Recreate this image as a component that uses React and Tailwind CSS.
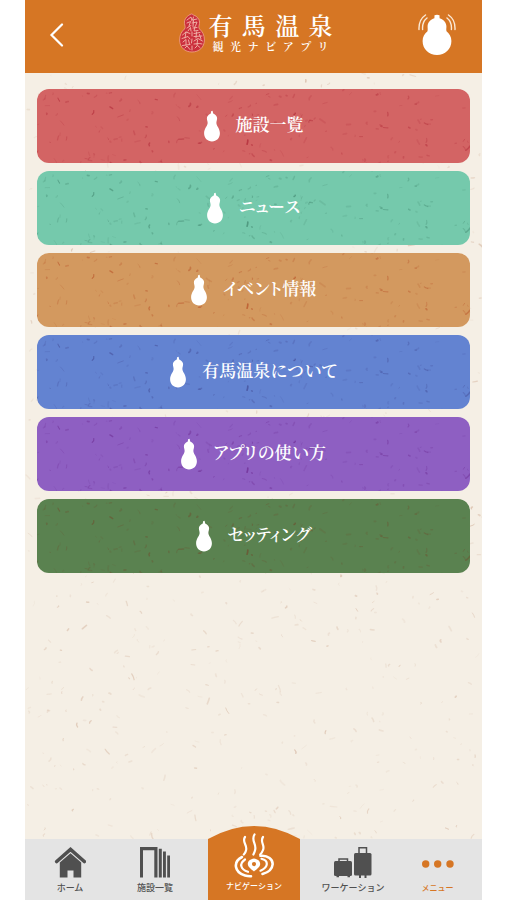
import React from "react";

const JP = "font-['Noto_Sans_CJK_JP',sans-serif]";
const MINCHO = "font-['Noto_Serif_CJK_JP','Noto_Sans_CJK_JP',serif]";
const LOGO = "font-['Liberation_Serif','Noto_Serif_CJK_JP','Noto_Sans_CJK_JP',serif]";

const items = [
  { label: "施設一覧", bg: "bg-[#d36464]", speck: "#b02a38" },
  { label: "ニュース", bg: "bg-[#76c9ac]", speck: "#458a72" },
  { label: "イベント情報", bg: "bg-[#d39a60]", speck: "#b9532a" },
  { label: "有馬温泉について", bg: "bg-[#6383d1]", speck: "#454f98" },
  { label: "アプリの使い方", bg: "bg-[#8e60c3]", speck: "#702f94" },
  { label: "セッティング", bg: "bg-[#5a8250]", speck: "#6f5030" },
];

// Deterministic fibres of the washi paper
function makeFibres(seed, count, width, height) {
  let s = seed;
  const next = () => {
    s = (s + 0x6d2b79f5) | 0;
    let t = Math.imul(s ^ (s >>> 15), 1 | s);
    t = (t + Math.imul(t ^ (t >>> 7), 61 | t)) ^ t;
    return ((t ^ (t >>> 14)) >>> 0) / 4294967296;
  };
  return Array.from({ length: count }, () => {
    const x = next() * width;
    const y = next() * height;
    const angle = next() * Math.PI;
    const len = 1 + next() * next() * 6;
    const dx = Math.cos(angle) * len;
    const dy = Math.sin(angle) * len;
    const bend = (next() - 0.5) * 3;
    return {
      d: `M${x.toFixed(1)} ${y.toFixed(1)}q${(dx / 2 + bend).toFixed(1)} ${(dy / 2).toFixed(1)} ${dx.toFixed(1)} ${dy.toFixed(1)}`,
      w: 0.6 + next() * 1.1,
      o: 0.15 + next() * next() * 0.7,
    };
  });
}

const paperFibres = makeFibres(11, 900, 457, 828);
const buttonFibres = makeFibres(42, 190, 433, 75);

function Washi({ fibres, color, strength }) {
  return (
    <svg
      className="pointer-events-none absolute inset-0 h-full w-full"
      aria-hidden="true"
      fill="none"
      stroke={color}
      strokeLinecap="round"
      opacity={strength}
    >
      {fibres.map((f, i) => (
        <path key={i} d={f.d} strokeWidth={f.w} opacity={f.o} />
      ))}
    </svg>
  );
}

function Gourd() {
  return (
    <svg className="relative h-8 w-4 shrink-0" viewBox="0 0 16 32" fill="#fff" aria-hidden="true">
      <path d="M7.100 1.200 8.600.8 9.200 3.400C11.800 4.600 13.200 6.300 13.100 8.600 13 10.500 12.300 11.500 12.400 13.200 12.600 16.300 15.900 18.400 15.900 23.300 15.900 28.200 12.500 31.400 8 31.400S.1 28.200.1 23.300C.1 18.400 3.400 16.300 3.600 13.200 3.700 11.500 3 10.500 2.900 8.600 2.800 6.300 4.200 4.600 6.800 3.400Z" />
    </svg>
  );
}

function BellGourd() {
  return (
    <svg className="h-[42px] w-[38px]" viewBox="0 0 38 42" fill="none" aria-hidden="true">
      <path
        fill="#fff"
        d="M16.500 1.300Q19 .2 21.500 1.300L21.600 4.200C25.500 5.300 28.200 8.300 28.400 12 28.500 14.200 28 15.600 28.500 17.200 31.500 19.500 33.400 22.700 33.400 27 33.400 35.200 27 41 19 41S4.600 35.200 4.600 27C4.600 22.700 6.500 19.500 9.500 17.200 10 15.600 9.500 14.200 9.600 12 9.800 8.300 12.500 5.300 16.400 4.200Z"
      />
      <g stroke="#fbe9d6" strokeWidth="1.400" strokeLinecap="round">
        <path d="M7.500 1C3 4 .7 9 1 15.500M9 4C5.600 6.600 4.200 10.500 4.600 15.500M30.500 1C35 4 37.300 9 37 15.500M29 4C32.400 6.600 33.800 10.500 33.400 15.500" />
      </g>
    </svg>
  );
}

function SealGourd() {
  return (
    <svg className="h-10 w-[26px] shrink-0" viewBox="0 0 26 40" fill="none" aria-hidden="true">
      <path
        fill="#cb2f3c"
        stroke="#f0a58c"
        strokeWidth=".8"
        d="M11 1.500Q13 0 14.500 2C18.500 3.500 21 6.500 20.500 10.500 20.200 13 19.200 14 20.500 16 23.500 18.500 25.400 22 25.400 27 25.400 34.500 20 39 13 39S.6 34.500.6 27C.6 22 2.500 18.500 5.500 16 6.800 14 5.800 13 5.500 10.500 5 6.500 7.500 3.500 11 1.500Z"
      />
      <g stroke="#f3b9ae" strokeWidth=".9" strokeLinecap="round">
        <path d="M8 7 12 4 13 8M14.500 4 13.500 7 18 6M8 10 11.500 8.500 10 13M13 10 18 9 16.500 13M14.500 7.500 14 13.500M8 15 12 12.500M9 18 11.500 14.500 12 18M14 15 18 14.500M16 13.500 15 18 19 17.500M3.500 22 7 19 11 20.500M7 19 6 25M3 25.500 9 23.500 11 26M4 29 7 26.500 7 32M9.500 27 10.500 31M3.500 32.500 11 31.500M6 35 8 33 11 36.500M13 19V23M13 26 12.500 30M13 33V37M15 20.500 21 19.500M17.500 19 17 25M15 23.500 23 23M20.500 21.500 22 26M15 28 19 25.500 23.500 28M18.500 27 18 32M15 31 20.500 30.500 23 31M16 35 18.500 32.500 21 34.500" />
      </g>
    </svg>
  );
}

function HomeIcon() {
  return (
    <svg className="h-[31px] w-8" viewBox="0 0 32 31" fill="none" aria-hidden="true">
      <path stroke="#505050" strokeWidth="3.600" strokeLinecap="round" d="M2.700 14.500 16.500 2.500 30.300 14.500" />
      <path fill="#505050" d="M5.800 15.600 16.500 6.200 27.200 15.600V30.500H19.500V23.500H13.500V30.500H5.800Z" />
    </svg>
  );
}

function FacilityIcon() {
  return (
    <svg className="h-[31px] w-8" viewBox="0 0 32 31" fill="#505050" aria-hidden="true">
      <path d="M1 0H18.500V30.500H15.300V3.200H4V30.500H1ZM19.800 1.800H22.800V30.500H19.800ZM24 4.500H26.900V30.500H24ZM28.200 8.500H31V30.500H28.200Z" />
    </svg>
  );
}

function SpringIcon() {
  return (
    <svg className="h-[46px] w-10" viewBox="0 0 40 46" fill="none" stroke="#fff" strokeLinecap="round" aria-hidden="true">
      <path strokeWidth="2.200" d="M11 4C7.500 9 13.800 12 12 17.500 11.600 19.500 10.800 20.500 9.800 21.500M20.500 1.500C16.500 7.500 23.200 11 21 17.500 20.600 19 20 20.300 19.400 21.500M29 4C25.500 9 31.300 12 29 17 28.300 19 27.500 20.300 26.200 21.500" />
      <path
        fill="#fff"
        fillRule="evenodd"
        stroke="none"
        d="M20 25.500C23.600 26 26.200 28 26.200 31 26.200 33.800 23 36 20 38.500 17 36 13.800 33.800 13.800 31 13.800 28 16.400 26 20 25.500ZM20 29A2.100 2.100 0 1 0 20 33.200 2.100 2.100 0 1 0 20 29Z"
      />
      <path strokeWidth="2.600" d="M8 24C-1.500 29 .5 39.500 11 42.500 13 43.100 15 43.300 17 43.200" />
      <path strokeWidth="2.200" d="M11 26.500C4.500 31 7 36.500 14 38.800" />
      <path strokeWidth="2.600" d="M26.500 22.800C34 22 39 26.500 38.600 31.500 38.200 36 34 39.500 28.500 41" />
      <path strokeWidth="2.200" d="M27.500 25.800C34.500 27.500 35 34 26.500 37.700" />
    </svg>
  );
}

function LuggageIcon() {
  return (
    <svg className="h-[31px] w-[38px]" viewBox="0 0 38 31" aria-hidden="true">
      <g fill="#505050">
        <rect x="0" y="14" width="18" height="15" rx="1.500" />
        <rect x="20" y="6" width="17.500" height="22.500" rx="1.500" />
        <path d="M2.500 28H5V30.300H2.500ZM13.500 28H16V30.300H13.500ZM25 28H27V31H25ZM30.500 28H32.500V31H30.500Z" />
      </g>
      <path fill="none" stroke="#505050" strokeWidth="1.500" d="M5 15V12H13.500V15M25 7V.8H32.500V7" />
    </svg>
  );
}

function DotsIcon() {
  return (
    <svg className="h-[31px] w-8" viewBox="0 0 32 31" fill="#d67624" aria-hidden="true">
      <circle cx="3.700" cy="17" r="3.700" />
      <circle cx="15.700" cy="17" r="3.700" />
      <circle cx="28" cy="17" r="3.700" />
    </svg>
  );
}

function Tab({ icon, label, active }) {
  return (
    <button type="button" className="flex flex-col items-center gap-1 pt-2">
      {icon}
      <span className={`whitespace-nowrap leading-3 font-medium ${active ? "text-[8px] text-[#d67624]" : "text-[9px] text-[#505050]"}`}>
        {label}
      </span>
    </button>
  );
}

export default function App() {
  return (
    <div className={`min-h-screen bg-white px-[25px] ${JP}`} lang="ja">
      <div className="flex min-h-screen flex-col bg-[#f5efe5]">
        <header className="grid h-[73px] grid-cols-[64px_1fr_64px] items-center bg-[#d67624]">
          <button type="button" aria-label="戻る" className="justify-self-center pb-1">
            <svg className="h-6 w-4" viewBox="0 0 16 24" fill="none" stroke="#fff" strokeWidth="2.200" strokeLinecap="round" aria-hidden="true">
              <path d="M13 1.500 2.500 12 13 22.500" />
            </svg>
          </button>
          <h1 className={`flex items-center justify-center gap-1 pb-2 pl-1 text-white ${LOGO}`}>
            <SealGourd />
            <span className="flex w-[124px] flex-col items-center">
              <span className="w-full text-[24px] leading-7 font-semibold [text-align-last:justify]">有馬温泉</span>
              <span className="w-[116px] text-[11px] leading-3 font-semibold [text-align-last:justify]">観光ナビアプリ</span>
            </span>
          </h1>
          <button type="button" aria-label="お知らせ" className="justify-self-start pb-1">
            <BellGourd />
          </button>
        </header>

        <main className="relative flex-1 overflow-hidden px-3 pt-4 pb-10">
          <Washi fibres={paperFibres} color="#c99f84" strength={0.6} />
          <nav aria-label="メニュー" className="relative flex flex-col gap-2">
            {items.map((item) => (
              <button
                key={item.label}
                type="button"
                className={`relative flex h-[74px] items-center justify-center gap-4 overflow-hidden rounded-xl ${item.bg}`}
              >
                <Washi fibres={buttonFibres} color={item.speck} strength={0.9} />
                <Gourd />
                <span className={`relative pb-1 text-[17px] leading-6 font-semibold text-white [font-feature-settings:'palt'] ${MINCHO}`}>
                  {item.label}
                </span>
              </button>
            ))}
          </nav>
        </main>

        <footer className="relative grid h-[61px] grid-cols-[90fr_80fr_118fr_80fr_89fr] items-start bg-[#e4e4e4]">
          <Tab icon={<HomeIcon />} label="ホーム" />
          <Tab icon={<FacilityIcon />} label="施設一覧" />
          <button
            type="button"
            className="relative -mt-[13px] flex h-[74px] w-[92px] flex-col items-center justify-self-center pt-[7px] text-white"
          >
            <svg className="absolute inset-0 h-full w-full" viewBox="0 0 92 74" preserveAspectRatio="none" fill="#d67624" aria-hidden="true">
              <path d="M0 13Q46-13 92 13V74H0Z" />
            </svg>
            <span className="relative flex flex-col items-center gap-px">
              <SpringIcon />
              <span className="whitespace-nowrap text-[8px] leading-3 font-medium">ナビゲーション</span>
            </span>
          </button>
          <Tab icon={<LuggageIcon />} label="ワーケーション" />
          <Tab icon={<DotsIcon />} label="メニュー" active />
        </footer>
      </div>
    </div>
  );
}
